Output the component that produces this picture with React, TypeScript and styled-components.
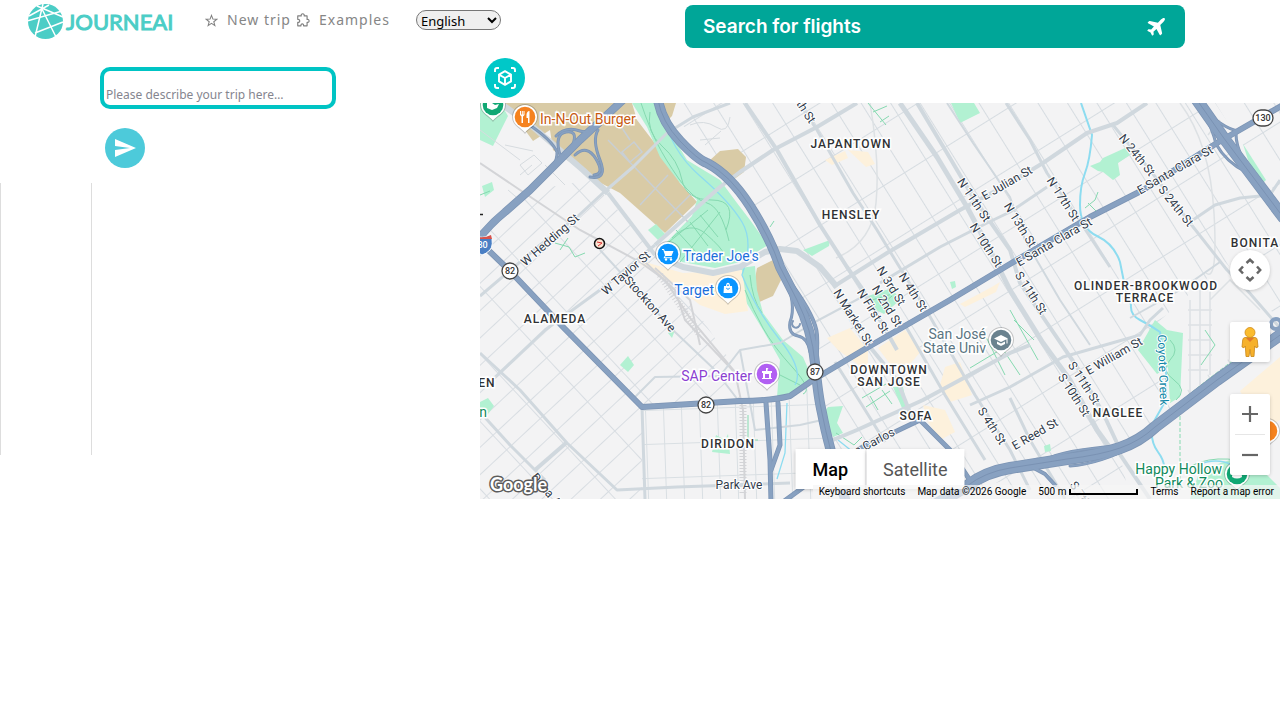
import React from "react";
import styled, { createGlobalStyle, css } from "styled-components";

const GlobalStyle = createGlobalStyle`
  * { box-sizing: border-box; }
  body { margin: 0; background: #fff; font-family: "Noto Sans", sans-serif; color: #808080; }
  button { font: inherit; border: 0; padding: 0; cursor: pointer; }
`;

/* ---------- header ---------- */

const Header = styled.header`
  display: flex;
  align-items: flex-start;
  height: 58px;
`;

const Brand = styled.a`
  display: flex;
  margin: 3px 0 0 27px;
  text-decoration: none;
`;

const Nav = styled.nav`
  display: flex;
  align-items: center;
  gap: 5px;
  height: 40px;
  margin-left: 31px;
`;

const NavLink = styled.a`
  display: flex;
  align-items: center;
  gap: 9px;
  color: #868686;
  font-size: 14px;
  line-height: 20px;
  letter-spacing: 1px;
  text-decoration: none;
  white-space: nowrap;
`;

const Language = styled.select`
  width: 85px;
  height: 20px;
  margin: 10px 0 0 26px;
  border: 1px solid #767676;
  border-radius: 10px;
  background: #efefef;
  color: #000;
  font: 13px "Noto Sans", sans-serif;
  padding: 0;
`;

const FlightSearch = styled.button`
  display: flex;
  align-items: center;
  justify-content: space-between;
  width: 500px;
  height: 43px;
  margin: 5px 95px 0 auto;
  padding: 0 19px 0 18px;
  border-radius: 8px;
  background: #00a698;
  color: #fff;
  font: 600 19px Inter, sans-serif;
`;

/* ---------- page body ---------- */

const Body = styled.main`
  display: grid;
  grid-template-columns: 3fr 5fr;
`;

const Planner = styled.section`
  display: flex;
  flex-direction: column;
  align-items: flex-start;
`;

const TripForm = styled.form`
  display: flex;
  flex-direction: column;
  align-items: flex-start;
  gap: 19px;
  padding: 9px 0 15px 100px;
`;

const TripInput = styled.input`
  width: 236px;
  height: 42px;
  border: 4px solid #00c4c4;
  border-radius: 10px;
  padding: 13px 2px 0;
  outline: 0;
  font: 12px "Noto Sans", sans-serif;
  &::placeholder { color: #85858f; opacity: 1; }
`;

const RoundButton = styled.button<{ $tone: string }>`
  display: flex;
  align-items: center;
  justify-content: center;
  width: 40px;
  height: 40px;
  margin-left: 5px;
  border-radius: 50%;
  background: ${(p) => p.$tone};
`;

const DayColumn = styled.div`
  width: 92px;
  height: 272px;
  border: solid #ddd;
  border-width: 0 1px;
`;

const MapSide = styled.section`
  display: flex;
  flex-direction: column;
  gap: 5px;
  min-width: 0;
`;

const MapFrame = styled.div`
  position: relative;
  height: 396px;
  overflow: hidden;
  font-family: Roboto, sans-serif;
`;

const MapCanvas = styled.svg`
  display: block;
  width: 100%;
  height: 100%;
  background: #f3f3f4;
`;

/* ---------- map controls ---------- */

const raised = css`
  background: #fff;
  box-shadow: 0 1px 4px -1px rgba(0, 0, 0, 0.3);
`;

const ControlStack = styled.div`
  position: absolute;
  right: 10px;
  bottom: 24px;
  display: flex;
  flex-direction: column;
  gap: 32px;
`;

const Control = styled.button<{ $round?: boolean }>`
  ${raised}
  display: flex;
  align-items: center;
  justify-content: center;
  width: 40px;
  height: 40px;
  border-radius: ${(p) => (p.$round ? "50%" : "2px")};
`;

const ZoomGroup = styled.div`
  ${raised}
  display: flex;
  flex-direction: column;
  align-items: center;
  border-radius: 2px;
`;

const ZoomButton = styled.button`
  display: flex;
  align-items: center;
  justify-content: center;
  width: 40px;
  height: 40px;
  background: none;
`;

const ZoomRule = styled.div`
  width: 30px;
  height: 1px;
  background: #e6e6e6;
`;

const MapTypes = styled.div`
  position: absolute;
  bottom: 10px;
  left: 50%;
  transform: translateX(-50%);
  display: flex;
  gap: 1px;
`;

const MapType = styled.button<{ $active?: boolean }>`
  ${raised}
  height: 40px;
  padding: 0 17px;
  color: ${(p) => (p.$active ? "#000" : "#565656")};
  font-size: 18px;
  font-weight: ${(p) => (p.$active ? 500 : 400)};
`;

const Attribution = styled.div`
  position: absolute;
  right: 0;
  bottom: 0;
  display: flex;
  align-items: center;
  gap: 12px;
  height: 14px;
  padding: 0 6px;
  background: rgba(245, 245, 245, 0.7);
  color: #000;
  font-size: 10px;
  line-height: 14px;
  white-space: nowrap;
`;

const AttributionButton = styled.button`
  background: none;
  color: #000;
`;

const AttributionLink = styled.a`
  color: #000;
  text-decoration: none;
`;

const Scale = styled.span`
  display: flex;
  align-items: center;
  gap: 3px;
`;

const ScaleBar = styled.span`
  width: 69px;
  height: 6px;
  border: solid #000;
  border-width: 0 2px 2px;
`;

/* ---------- map data ---------- */

type Pt = [number, number];
const pts = (list: Pt[]) => list.map((p) => p.join(",")).join(" ");

const AIRPORT = "#d9cba6";
const PARK = "#b2f1d2";
const SHOPS = "#fdf1dc";

const areas: { fill: string; d: string }[] = [
  { fill: AIRPORT, d: "505,103 632,103 637,120 660,150 680,183 697,202 665,233 620,193 595,180 553,150 550,130 533,141" },
  { fill: AIRPORT, d: "655,103 676,103 672,116 668,120" },
  { fill: AIRPORT, d: "708,162 720,151 738,149 746,157 744,172 733,180" },
  { fill: AIRPORT, d: "757,268 775,259 781,280 773,296 757,303 753,290" },
  { fill: AIRPORT, d: "757,217 770,235 778,247 772,250" },
  { fill: PARK, d: "480,103 502,106 508,116 493,146 480,140" },
  { fill: PARK, d: "632,103 657,103 667,127 687,160 720,180 737,203 750,220 768,245 740,262 715,268 682,262 663,246 692,216 697,200 680,183 660,157 647,127" },
  { fill: PARK, d: "740,268 755,266 757,290 763,313 783,340 803,357 813,380 793,397 777,397 780,360 763,330 743,297" },
  { fill: PARK, d: "648,230 656,224 665,234 658,240" },
  { fill: PARK, d: "1155,320 1167,330 1183,333 1180,397 1170,403 1168,367 1157,374 1138,350" },
  { fill: PARK, d: "1090,166 1100,162 1103,158 1125,148 1130,155 1118,163 1120,175 1113,180 1103,172 1098,171" },
  { fill: PARK, d: "951,103 974,103 980,113 960,123" },
  { fill: PARK, d: "828,407 843,406 837,423 843,433 833,437 823,413" },
  { fill: PARK, d: "893,387 903,387 908,410 902,408" },
  { fill: PARK, d: "628,356 634,365 628,372 620,365" },
  { fill: PARK, d: "488,398 494,406 485,418 480,412 480,402" },
  { fill: PARK, d: "868,296 892,288 900,300 884,314 876,310" },
  { fill: PARK, d: "803,250 830,240 829,246 812,256" },
  { fill: PARK, d: "668,333 675,330 672,338" },
  { fill: PARK, d: "482,186 492,182 494,190 485,197" },
  { fill: PARK, d: "1243,144 1266,180 1262,184 1248,160" },
  { fill: PARK, d: "1190,499 1200,470 1230,460 1262,470 1280,488 1280,499" },
  { fill: PARK, d: "716,435 725,440 728,434 730,454 712,452" },
  { fill: PARK, d: "1044,446 1050,444 1051,451 1045,452" },
  { fill: PARK, d: "950,282 955,281 956,287 952,289" },
  { fill: SHOPS, d: "645,262 683,273 742,270 748,311 725,314 700,305 675,285 640,264" },
  { fill: SHOPS, d: "827,338 850,328 868,350 868,372 852,360 838,350" },
  { fill: SHOPS, d: "878,348 905,330 922,350 905,370 890,364" },
  { fill: SHOPS, d: "945,367 960,362 972,395 950,402 940,385" },
  { fill: SHOPS, d: "923,405 945,410 955,432 940,440 928,422" },
  { fill: SHOPS, d: "825,160 845,151 848,158 832,165" },
  { fill: SHOPS, d: "848,150 868,152 875,164 866,167" },
  { fill: SHOPS, d: "960,304 990,288 1000,282 996,292 965,307" },
  { fill: SHOPS, d: "1240,391 1280,357 1280,420 1262,430" },
];

const arterials: { w: number; p: Pt[] }[] = [
  { w: 4, p: [[745, 103], [777, 150], [820, 225], [847, 267], [863, 290], [897, 350]] },
  { w: 3, p: [[797, 100], [817, 130], [853, 193], [877, 230], [897, 263], [925, 308], [975, 395], [1010, 450], [1030, 490]] },
  { w: 5, p: [[900, 103], [937, 157], [967, 207], [990, 250], [1010, 290], [1043, 343], [1070, 380], [1097, 430], [1110, 448]] },
  { w: 4, p: [[917, 103], [947, 153], [973, 197], [1010, 250], [1020, 283], [1047, 323], [1077, 367], [1103, 413], [1117, 443]] },
  { w: 2, p: [[947, 103], [973, 143], [1010, 197], [1025, 240], [1060, 300], [1090, 345]] },
  { w: 3, p: [[1006, 103], [1030, 140], [1047, 173], [1077, 217], [1110, 267]] },
  { w: 3, p: [[1113, 125], [1150, 170], [1190, 223], [1227, 270], [1247, 290], [1280, 328]] },
  { w: 4, p: [[655, 245], [720, 187], [740, 172], [773, 150], [817, 127], [857, 103]] },
  { w: 4, p: [[833, 287], [887, 253], [960, 210], [1010, 183], [1043, 163], [1087, 133], [1117, 123], [1147, 103]] },
  { w: 3, p: [[880, 283], [940, 247], [987, 223], [1010, 212], [1047, 187]] },
  { w: 6, p: [[500, 103], [533, 127], [583, 170], [608, 193]] },
  { w: 4, p: [[608, 193], [630, 222], [655, 255]] },
  { w: 3, p: [[480, 296], [540, 245], [577, 217], [603, 193], [633, 167], [667, 133], [693, 117], [730, 103]] },
  { w: 6, p: [[655, 255], [683, 267], [713, 273], [740, 267], [765, 252], [780, 249], [797, 251], [820, 267], [837, 287]] },
  { w: 3, p: [[480, 353], [520, 390], [567, 443], [617, 490], [677, 487], [790, 483]] },
  { w: 3, p: [[480, 412], [510, 445], [545, 480]] },
  { w: 4, p: [[566, 443], [535, 470]] },
  { w: 3, p: [[490, 382], [545, 330], [600, 290], [655, 245]] },
  { w: 3, p: [[642, 407], [645, 499]] },
  { w: 2, p: [[635, 397], [655, 377], [720, 376], [740, 350], [780, 343], [815, 322], [860, 298]] },
  { w: 2, p: [[600, 250], [675, 332], [715, 370], [738, 400]] },
  { w: 4, p: [[833, 440], [857, 430], [923, 400], [1010, 353], [1030, 345]] },
  { w: 3, p: [[970, 405], [1010, 387], [1063, 357], [1140, 335], [1150, 320], [1163, 308]] },
  { w: 4, p: [[870, 347], [897, 380], [913, 420]] },
  { w: 3, p: [[835, 362], [862, 405], [885, 442]] },
  { w: 3, p: [[905, 325], [945, 395], [985, 460]] },
  { w: 3, p: [[1190, 222], [1215, 205], [1240, 198], [1270, 195], [1280, 180]] },
  { w: 2, p: [[740, 350], [755, 430], [800, 425], [822, 420]] },
  { w: 3, p: [[1010, 398], [1030, 440], [1065, 499]] },
  { w: 2, p: [[1130, 318], [1180, 290], [1220, 262]] },
  { w: 4, p: [[1117, 450], [1150, 499]] },
];

const rails: Pt[][] = [
  [[480, 163], [520, 190], [580, 230], [640, 262], [665, 280], [690, 318], [735, 372], [743, 410], [745, 499]],
  [[645, 262], [675, 290], [685, 320], [740, 378]],
  [[655, 268], [690, 300], [700, 345]],
];

const highways: { w: number; d: string }[] = [
  { w: 8, d: "M623 100L580 140L530 190L505 212Q490 224 478 240" },
  { w: 10, d: "M658 100Q662 122 680 141T707 163Q730 175 750 206T780 267L797 300Q812 330 815 363T822 413Q828 445 845 499" },
  { w: 4, d: "M792 285Q816 318 817 335T815 365" },
  { w: 3, d: "M784 275Q797 305 790 322Q788 334 798 336T810 352" },
  { w: 2, d: "M800 324a4 4 0 1 1-7-3" },
  { w: 12, d: "M1197 100L1223 137L1250 173L1283 217" },
  { w: 3, d: "M1203 108Q1222 128 1238 131" },
  { w: 3, d: "M1236 134Q1236 156 1262 186" },
  { w: 3, d: "M1201 106Q1213 130 1216 144Q1226 162 1246 172" },
  { w: 12, d: "M935 505L967 486Q985 472 1010 468L1067 459Q1100 455 1120 448T1155 427L1217 380L1283 333" },
  { w: 3, d: "M1045 460Q1062 450 1118 446" },
  { w: 3, d: "M1070 466Q1100 464 1138 444" },
  { w: 6, d: "M1283 105L1217 143L1143 190L1090 217L1010 264L950 300L870 346L813 380L790 396Q770 401 740 401L642 407L563 327L510 271L485 247" },
  { w: 5, d: "M783 502L820 475L857 450L920 420L950 450L975 488" },
  { w: 5, d: "M766 403L770 460L771 502" },
  { w: 5, d: "M778 403L780 445L771 470" },
  { w: 3, d: "M528 124Q552 140 557 152Q558 166 538 182" },
  { w: 3, d: "M560 155Q554 134 566 132T573 144T560 155" },
  { w: 3, d: "M575 155Q587 144 596 159T594 175" },
  { w: 3, d: "M598 130Q592 140 600 160T590 177" },
  { w: 3, d: "M556 136Q566 126 580 131T612 112" },
  { w: 4, d: "M1030 466L1045 474L1055 485" },
];

const streets: { t: string; x: number; y: number; r: number; water?: boolean }[] = [
  { t: "W Hedding St", x: 550, y: 240, r: -41 },
  { t: "W Taylor St", x: 626, y: 273, r: -41 },
  { t: "Stockton Ave", x: 650, y: 304, r: 48 },
  { t: "N 4th St", x: 801, y: 104, r: 57 },
  { t: "N 11th St", x: 974, y: 200, r: 56 },
  { t: "N 10th St", x: 986, y: 245, r: 57 },
  { t: "E Julian St", x: 1007, y: 183, r: -30 },
  { t: "N 13th St", x: 1020, y: 225, r: 58 },
  { t: "N 17th St", x: 1063, y: 199, r: 57 },
  { t: "N 24th St", x: 1137, y: 155, r: 51 },
  { t: "S 24th St", x: 1176, y: 206, r: 51 },
  { t: "E Santa Clara St", x: 1175, y: 170, r: -30 },
  { t: "E Santa Clara St", x: 1054, y: 242, r: -30 },
  { t: "S 11th St", x: 1031, y: 293, r: 57 },
  { t: "N 3rd St", x: 891, y: 286, r: 58 },
  { t: "N 4th St", x: 913, y: 292, r: 58 },
  { t: "N 2nd St", x: 887, y: 306, r: 58 },
  { t: "N First St", x: 873, y: 311, r: 58 },
  { t: "N Market St", x: 853, y: 317, r: 58 },
  { t: "S 4th St", x: 992, y: 426, r: 57 },
  { t: "S 11th St", x: 1084, y: 383, r: 57 },
  { t: "S 10th St", x: 1074, y: 395, r: 57 },
  { t: "E William St", x: 1114, y: 356, r: -30 },
  { t: "E Reed St", x: 1035, y: 434, r: -30 },
  { t: "E San Carlos", x: 864, y: 447, r: -28 },
  { t: "S 7th St", x: 1084, y: 500, r: 57 },
  { t: "Dana Ave", x: 550, y: 494, r: 50 },
  { t: "Park Ave", x: 739, y: 485, r: 0 },
  { t: "Coyote Creek", x: 1163, y: 370, r: 88, water: true },
];

const districts: { t: string; x: number; y: number }[] = [
  { t: "JAPANTOWN", x: 851, y: 144 },
  { t: "HENSLEY", x: 851, y: 215 },
  { t: "ALAMEDA", x: 555, y: 319 },
  { t: "OLINDER-BROOKWOOD", x: 1146, y: 286 },
  { t: "TERRACE", x: 1145, y: 298 },
  { t: "DOWNTOWN", x: 889, y: 370 },
  { t: "SAN JOSE", x: 889, y: 382 },
  { t: "SOFA", x: 916, y: 416 },
  { t: "NAGLEE", x: 1118, y: 413 },
  { t: "DIRIDON", x: 728, y: 444 },
  { t: "BONITA", x: 1255, y: 243 },
  { t: "EN", x: 487, y: 383 },
];

const StreetLabel = styled.text<{ $water?: boolean }>`
  font: 12px Roboto, sans-serif;
  fill: ${(p) => (p.$water ? "#0c86a6" : "#303a4a")};
  stroke: #fff;
  stroke-width: 2px;
  paint-order: stroke;
  text-anchor: middle;
  dominant-baseline: central;
`;

const DistrictLabel = styled.text`
  font: 500 12px Roboto, sans-serif;
  letter-spacing: 1px;
  fill: #2f3133;
  stroke: #fff;
  stroke-width: 3px;
  paint-order: stroke;
  text-anchor: middle;
  dominant-baseline: central;
`;

const PlaceLabel = styled.text<{ $end?: boolean }>`
  font: 14px Roboto, sans-serif;
  stroke: #fff;
  stroke-width: 3px;
  paint-order: stroke;
  text-anchor: ${(p) => (p.$end ? "end" : "start")};
  dominant-baseline: central;
`;

const ShieldLabel = styled.text<{ $light?: boolean }>`
  font: 500 9px Roboto, sans-serif;
  fill: ${(p) => (p.$light ? "#fff" : "#333")};
  text-anchor: middle;
  dominant-baseline: central;
`;

const GoogleLabel = styled.text`
  font: 700 18px Lato, sans-serif;
  fill: #fff;
  stroke: #5c5c5c;
  stroke-width: 3px;
  stroke-linejoin: round;
  paint-order: stroke;
`;

const LogoText = styled.text`
  font: 400 22px Lato, sans-serif;
  fill: #4bcdc6;
  stroke: #4bcdc6;
  stroke-width: 1px;
`;

const Pin = ({ x, y, color, children }: { x: number; y: number; color: string; children?: React.ReactNode }) => (
  <g transform={`translate(${x} ${y})`}>
    <path d="M0 17C-3 12-13 9-13 0a13 13 0 0 1 26 0c0 9-10 12-13 17z" fill="#0003" />
    <path d="M0 15.500C-3 11-12 8.500-12 0a12 12 0 0 1 24 0c0 8.500-9 11-12 15.500z" fill="#fff" />
    <circle r="10.300" fill={color} />
    <g fill="#fff">{children}</g>
  </g>
);

const Shield = ({ x, y, n }: { x: number; y: number; n: string }) => {
  const w = n.length > 2 ? 20 : 16;
  return (
    <g>
      <rect x={x - w / 2} y={y - 8} width={w} height={16} rx={8} fill="#fff" stroke="#444" strokeWidth={1.300} />
      <ShieldLabel x={x} y={y}>{n}</ShieldLabel>
    </g>
  );
};

const CityMap = () => (
  <MapCanvas viewBox="480 103 800 396" preserveAspectRatio="xMidYMid slice" role="img" aria-label="Map of San Jose">
    <defs>
      <pattern id="east" width="52" height="25" patternUnits="userSpaceOnUse" patternTransform="translate(820 225) rotate(58)">
        <path d="M0 .500H52M.500 0V25" stroke="#d6dce1" fill="none" />
      </pattern>
      <pattern id="west" width="46" height="20" patternUnits="userSpaceOnUse" patternTransform="translate(485 360) rotate(-43)">
        <path d="M0 .500H46M.500 0V20" stroke="#d8dde2" fill="none" />
      </pattern>
      <pattern id="south" width="18" height="34" patternUnits="userSpaceOnUse" patternTransform="translate(645 410) rotate(-2)">
        <path d="M0 .500H18M.500 0V34" stroke="#d9dfe3" fill="none" />
      </pattern>
    </defs>

    <path d="M480 103H1280V499H480z" fill="#f3f3f4" />
    <path d="M676 103H1197L1280 217V336L1120 447L940 499H845L815 363L780 260L750 206L690 145z" fill="url(#east)" />
    <path d="M480 240L533 190L590 180L655 250L740 375V401L642 407V499H480z" fill="url(#west)" />
    <path d="M642 407L790 400L815 385L840 499H642z" fill="url(#south)" />
    <path d="M1000 499L1010 475L1120 455L1130 499z" fill="url(#east)" />
    <path d="M1215 103H1280V200z" fill="url(#east)" />
    <path d="M1155 325L1225 262L1280 320L1185 392z" fill="#f3f3f4" />

    {areas.map((a) => (
      <polygon key={a.d} points={a.d} fill={a.fill} />
    ))}

    <g fill="none" stroke="#c9cfd4" strokeWidth="1.500">
      <path d="M608 140l80 82M622 152l12-10 8 10-12 10zM640 205l28-30M665 220l26-26M630 140l-8-12" />
      <path d="M520 175l12-10M508 190l14 12M545 165l20 20M520 165l14-10 8 8-14 12zM690 125q14-6 26 2t14-10M705 145l16-14M700 140l20-2M480 130l40 30M505 145l28 6" stroke="#d6dbdf" strokeWidth="1" />
      <path d="M1190 300V395M1200 290V385M1210 282V375M1188 310h24M1188 325h24M1188 340h24M1188 355h24M1188 370h20M1220 120l-12 15M1210 300l20-20 30 30" stroke="#dde1e4" />
      <path d="M1180 103q30 40 34 110t-8 60" stroke="#dde1e4" />
      <path d="M870 103q10 60 6 100t-40 55" stroke="#dde1e4" />
    </g>

    <g fill="none" stroke="#85d9b0" strokeWidth="1">
      <path d="M641 103q8 24 16 40t22 36 28 24 22 38M650 112q-4 20 12 34t20 34 30 20 14 30M664 246l44-36M680 262l40-50M676 230l20 22M690 222l18 24M700 215l18 22M672 238q18-18 34-4t18 20" />
      <path d="M555 243l14 4 6 10 10-4M560 250l8-12M868 103l18 22M873 112l14-6M880 122l9-6M1085 208l10-8 3-8M1088 203l8 8M1170 340q10 10 0 20t4 20 2 20" />
      <path d="M970 368l40-24M965 376l60-30M985 335l20 40M1000 345l20 30M1010 310l28 50M1014 320l20 20M862 398l24-14M866 407l24-16M870 396l8 14M882 390l10 14M745 290q8 20 18 38t30 40 10 26M750 275q2 24 12 38M780 375l20 10M836 433l18 12 8-8" />
      <path d="M1178 404q20-18 80-62M1180 410V490" strokeDasharray="4 2" />
      <path d="M1205 330l10 15-14 20M770 227l4-6M480 195l10-4M872 300l20-6M880 306l12-10M748 415v25h10M1184 470q30-20 76-4" />
    </g>

    <g fill="none" stroke="#8ddcf0">
      <path d="M1081 103L1092 135Q1090 160 1085 173T1080 205Q1080 228 1097 236T1120 262L1125 287L1131 305Q1130 315 1140 320T1160 332L1166 370V400L1153 423Q1149 440 1158 452T1163 475" strokeWidth="2" />
      <path d="M663 112Q670 150 700 176T742 222T742 275Q756 310 780 340T795 385" strokeWidth="1.300" />
      <path d="M787 403l-2 50-8 26M838 440l20 16M1197 465q20-8 35 0" strokeWidth="1.300" />
    </g>

    <g fill="none" stroke="#d3d4d7" strokeWidth="2">
      {rails.map((r, i) => (
        <polyline key={i} points={pts(r)} />
      ))}
      <path d="M743 405v90" strokeWidth="7" strokeDasharray="1 2" />
      <path d="M660 275l40 60" strokeWidth="7" strokeDasharray="1 2" />
    </g>

    <g fill="none" stroke="#d0d8de" strokeLinejoin="round">
      {arterials.map((r, i) => (
        <polyline key={i} points={pts(r.p)} strokeWidth={r.w} />
      ))}
    </g>

    <g fill="none" strokeLinejoin="round" strokeLinecap="round">
      {highways.map((r) => (
        <path key={r.d} d={r.d} strokeWidth={r.w} stroke="#7c94b4" />
      ))}
      {highways.map((r) => (
        <path key={r.d} d={r.d} strokeWidth={r.w - 1.500} stroke="#88a1c1" />
      ))}
      <path d={`${highways[1].d}${highways[5].d}${highways[9].d}`} stroke="#7a92b3" />
      <circle cx="1276" cy="324" r="5" stroke="#88a1c1" strokeWidth="4" />
    </g>

    {streets.map((s) => (
      <StreetLabel key={`${s.t}${s.x}`} $water={s.water} transform={`translate(${s.x} ${s.y}) rotate(${s.r})`}>{s.t}</StreetLabel>
    ))}
    {districts.map((d) => (
      <DistrictLabel key={d.t} x={d.x} y={d.y}>{d.t}</DistrictLabel>
    ))}

    <Shield x={510} y={271} n="82" />
    <Shield x={706} y={405} n="82" />
    <Shield x={815} y={372} n="87" />
    <Shield x={1263} y={118} n="130" />
    <path d="M474 236q9 3 17-1 3 10-1 15-4 4-8 5-8-4-8-8z" fill="#4a7fc4" stroke="#fff" />
    <path d="M474 236q9 3 17-1l1 4h-18z" fill="#d9534b" />
    <ShieldLabel $light x={480} y={245}>880</ShieldLabel>
    <circle cx="599.500" cy="243.500" r="5" fill="#fbe3d2" stroke="#111" strokeWidth="1.500" />
    <path d="M597 242l5 1-4 3" stroke="#d33" fill="none" />

    <PlaceLabel x={540} y={119} fill="#c75a11">In-N-Out Burger</PlaceLabel>
    <PlaceLabel x={683} y={256} fill="#1a6fdb">Trader Joe's</PlaceLabel>
    <PlaceLabel x={714} y={290} fill="#1a6fdb" $end>Target</PlaceLabel>
    <PlaceLabel x={752} y={376} fill="#8b3fd1" $end>SAP Center</PlaceLabel>
    <PlaceLabel x={986} y={334} fill="#5b7582" $end>San José</PlaceLabel>
    <PlaceLabel x={986} y={348} fill="#5b7582" $end>State Univ</PlaceLabel>
    <PlaceLabel x={1222} y={469} fill="#118a5c" $end>Happy Hollow</PlaceLabel>
    <PlaceLabel x={1223} y={483} fill="#118a5c" $end>Park &amp; Zoo</PlaceLabel>
    <PlaceLabel x={487} y={412} fill="#118a5c" $end>Garden</PlaceLabel>
    <path d="M480 214.500h3" stroke="#222" strokeWidth="1.500" />

    <Pin x={493} y={105} color="#10a874">
      <path d="M-6-2h5l3 2 4-1-2 4-5 2-5-2zM0-6h6v4H0z" />
    </Pin>
    <Pin x={525} y={117} color="#f5821f">
      <path d="M-5-6v4l1.500 1.500V6h1.500V-.500L-.500-2v-4h-1v3.500h-.700V-6h-1v3.500h-.800V-6zM4.500-6C2.500-6 1.500-4 1.500-2v3H3v5h1.500z" />
    </Pin>
    <Pin x={668} y={254} color="#0a95ff">
      <path d="M-6-5h2l.800 2H5.500L3.500 2h-6l-.500 1.200H4v1h-8.500L-3 1.200-4.700-4H-6z" />
      <circle cx="-2" cy="5.500" r="1.200" /><circle cx="3" cy="5.500" r="1.200" />
    </Pin>
    <Pin x={728} y={288} color="#0a95ff">
      <path fillRule="evenodd" d="M-4.500 5l.5-7h2c0-4.500 4-4.500 4 0h2l.500 7zM-.800-2H.800c0-2.500-1.600-2.500-1.600 0zM-2 0q2 3.500 4 0l-.700-.300q-1.300 2-2.600 0z" />
    </Pin>
    <Pin x={767} y={374} color="#b160f2">
      <path fillRule="evenodd" d="M-5 5v-1h1v-5h-1v-2h4v-3h1.500l1 .800L.500-4.500V-3H5v2H4v5h1v1zM-2 4h4V0h-4z" />
    </Pin>
    <Pin x={1001} y={340} color="#6a828f">
      <path d="M0-5l7 3.500L0 2l-7-3.500zM-4 1.500L0 3.500l4-2V4L0 6l-4-2zM5.500-1.500h1v5h-1z" />
    </Pin>
    <Pin x={1267} y={431} color="#f5821f" />
    <Pin x={1237} y={474} color="#10a874">
      <path d="M-5 3q0-5 5-5t5 5q-5 3-10 0z" />
    </Pin>

    <GoogleLabel x={490} y={491}>Google</GoogleLabel>
  </MapCanvas>
);

/* ---------- icons ---------- */

const Logo = () => (
  <svg width="147" height="38" viewBox="0 0 147 38" role="img" aria-label="Journeai">
    <circle cx="18.500" cy="18.500" r="17.500" fill="#4bcdc6" />
    <path d="M10 3L36 14M16 1L8 34M15 6L29 34M0 18L35 8M8 30L36 19M2 13L22 2" stroke="#fff" strokeWidth="1.500" fill="none" />
    <LogoText x="39" y="27">JOURNEAI</LogoText>
  </svg>
);

const StarIcon = () => (
  <svg width="13" height="13" viewBox="0 0 24 24" fill="none" stroke="#808080" strokeWidth="1.900" strokeLinejoin="miter">
    <path d="M12 2.500l2.600 6.900 7.400.300-5.800 4.600 2 7.100L12 17.300l-6.200 4.100 2-7.100L2 9.700l7.400-.3z" />
  </svg>
);

const PuzzleIcon = () => (
  <svg width="14" height="14" viewBox="0 0 24 24" fill="none" stroke="#808080" strokeWidth="2" strokeLinejoin="round">
    <path d="M3 5h6c-1.500-5 6.500-5 5 0h5v6c4.500-1.500 4.500 6.500 0 5v6h-6c1-4.500-5.500-4.500-4.500 0H3v-6c4.500 1 4.500-6 0-5z" />
  </svg>
);

const PlaneIcon = () => (
  <svg width="20" height="20" viewBox="0 0 22 22" fill="#fff">
    <path d="M20.500 1.400c.9 1-.1 2.600-1.200 3.800l-3.600 3.700 2 8.700c.1.400 0 .7-.3 1l-1.200 1.200c-.4.400-1 .300-1.200-.200l-3.500-6.400-3.300 3.100.3 2.400c0 .3 0 .5-.2.700l-.9.900c-.3.300-.8.200-.9-.200L5 17l-3.200-1.600c-.4-.2-.4-.6-.1-.9l.9-.9c.2-.2.400-.2.700-.2l2.400.3 3-3.200L2.300 7c-.5-.3-.6-.8-.2-1.200l1.200-1.200c.3-.3.600-.3 1-.3l8.800 2 3.600-3.700c1.200-1.200 2.800-2.200 3.800-1.200z" />
  </svg>
);

const SendIcon = () => (
  <svg width="24" height="24" viewBox="0 0 24 24" fill="#fff">
    <path d="M2 21l21-9L2 3v7l15 2-15 2z" />
  </svg>
);

const CubeScanIcon = () => (
  <svg width="24" height="24" viewBox="0 0 24 24" fill="none" stroke="#fff" strokeWidth="1.900" strokeLinejoin="round">
    <path d="M2 6V4q0-2 2-2h2M18 2h2q2 0 2 2v2M22 18v2q0 2-2 2h-2M6 22H4q-2 0-2-2v-2" />
    <path d="M12 5.200l6 3.400v6.800l-6 3.400-6-3.400V8.600zM6 8.600l6 3.400 6-3.400M12 12v6.800" />
  </svg>
);

const PanIcon = () => (
  <svg width="24" height="24" viewBox="0 0 24 24" fill="none" stroke="#666" strokeWidth="2.500">
    <path d="M8.500 5L12 1.800 15.500 5M8.500 19l3.500 3.200 3.500-3.200M5 8.500L1.800 12 5 15.500M19 8.500l3.200 3.500-3.200 3.500" />
  </svg>
);

const PegmanIcon = () => (
  <svg width="18" height="30" viewBox="0 0 18 30">
    <path d="M4 10.500h10q2 0 2.300 2.500l.7 7-2 .8-1.300-1.800-.7 10.500H10l-1-7-1 7H5L4.300 19 3 20.800l-2-.8.700-7q.3-2.500 2.300-2.500z" fill="#f6b12c" stroke="#c98716" strokeWidth=".8" />
    <path d="M5 11l4 4 4-4z" fill="#e2782b" />
    <circle cx="9" cy="5.500" r="5" fill="#fbbc2e" stroke="#d18b1c" strokeWidth=".8" />
  </svg>
);

const App = () => (
  <>
    <GlobalStyle />
    <Header>
      <Brand href="#home"><Logo /></Brand>
      <Nav>
        <NavLink href="#new"><StarIcon />New trip</NavLink>
        <NavLink href="#examples"><PuzzleIcon />Examples</NavLink>
      </Nav>
      <Language aria-label="Language" defaultValue="en">
        <option value="en">English</option>
      </Language>
      <FlightSearch type="button">Search for flights<PlaneIcon /></FlightSearch>
    </Header>
    <Body>
      <Planner>
        <TripForm onSubmit={(e) => e.preventDefault()}>
          <TripInput aria-label="Trip description" placeholder="Please describe your trip here…" />
          <RoundButton $tone="#4dcada" type="submit" aria-label="Send"><SendIcon /></RoundButton>
        </TripForm>
        <DayColumn />
      </Planner>
      <MapSide>
        <RoundButton $tone="#00c8c8" type="button" aria-label="Toggle 3D view"><CubeScanIcon /></RoundButton>
        <MapFrame>
          <CityMap />
          <ControlStack>
            <Control $round type="button" aria-label="Map camera controls"><PanIcon /></Control>
            <Control type="button" aria-label="Street View"><PegmanIcon /></Control>
            <ZoomGroup>
              <ZoomButton type="button" aria-label="Zoom in">
                <svg width="16" height="16" viewBox="0 0 16 16"><path d="M0 8h16M8 0v16" stroke="#666" strokeWidth="2.200" /></svg>
              </ZoomButton>
              <ZoomRule />
              <ZoomButton type="button" aria-label="Zoom out">
                <svg width="16" height="16" viewBox="0 0 16 16"><path d="M0 8h16" stroke="#666" strokeWidth="2.200" /></svg>
              </ZoomButton>
            </ZoomGroup>
          </ControlStack>
          <MapTypes>
            <MapType $active type="button">Map</MapType>
            <MapType type="button">Satellite</MapType>
          </MapTypes>
          <Attribution>
            <AttributionButton type="button">Keyboard shortcuts</AttributionButton>
            <span>Map data ©2026 Google</span>
            <Scale>500 m<ScaleBar /></Scale>
            <AttributionLink href="#terms">Terms</AttributionLink>
            <AttributionLink href="#report">Report a map error</AttributionLink>
          </Attribution>
        </MapFrame>
      </MapSide>
    </Body>
  </>
);

export default App;
